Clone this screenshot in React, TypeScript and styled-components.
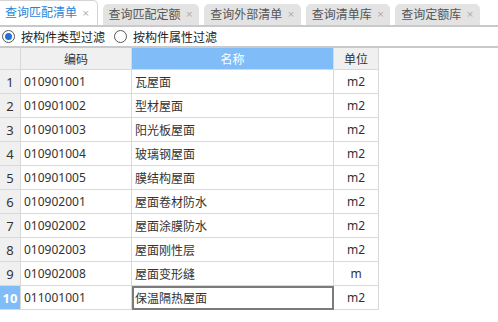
import { Fragment } from "react";
import styled, { createGlobalStyle } from "styled-components";

const rows = [
  { code: "010901001", name: "瓦屋面", unit: "m2" },
  { code: "010901002", name: "型材屋面", unit: "m2" },
  { code: "010901003", name: "阳光板屋面", unit: "m2" },
  { code: "010901004", name: "玻璃钢屋面", unit: "m2" },
  { code: "010901005", name: "膜结构屋面", unit: "m2" },
  { code: "010902001", name: "屋面卷材防水", unit: "m2" },
  { code: "010902002", name: "屋面涂膜防水", unit: "m2" },
  { code: "010902003", name: "屋面刚性层", unit: "m2" },
  { code: "010902008", name: "屋面变形缝", unit: "m" },
  { code: "011001001", name: "保温隔热屋面", unit: "m2" },
];

const tabs = ["查询匹配清单", "查询匹配定额", "查询外部清单", "查询清单库", "查询定额库"];

const GlobalStyle = createGlobalStyle`
  body {
    margin: 0;
    background: #fff;
    font-family: "Noto Sans", "Noto Sans CJK SC", sans-serif;
    font-size: 12px;
    color: #333;
  }
`;

const Page = styled.div`
  width: 498px;
  height: 322px;
  overflow: hidden;
  display: flex;
  flex-direction: column;
`;

const TabBar = styled.div`
  height: 25px;
  display: flex;
  align-items: flex-end;
  gap: 5px;
  border-bottom: 2px solid #c9c9cb;
`;

const Tab = styled.div<{ $active?: boolean }>`
  box-sizing: border-box;
  height: ${(p) => (p.$active ? "25px" : "21px")};
  display: flex;
  align-items: center;
  padding: ${(p) => (p.$active ? "0 7px 0 5px" : "0 6px 0 6px")};
  background: ${(p) => (p.$active ? "#fff" : "#e3e3e3")};
  border: ${(p) => (p.$active ? "1px solid #d4d4d4" : "none")};
  border-left: none;
  border-bottom: none;
  border-radius: ${(p) => (p.$active ? "0 5px 0 0" : "5px 5px 0 0")};
  color: ${(p) => (p.$active ? "#2b86d8" : "#555")};
  font-size: 12px;
  line-height: 1;
  white-space: nowrap;
`;

const Close = styled.span`
  margin-left: 5px;
  color: #aaa;
  font-size: 9px;
  font-family: "DejaVu Sans", sans-serif;
`;

const FilterRow = styled.div`
  height: 19px;
  display: flex;
  align-items: center;
  gap: 9px;
  padding-left: 2px;
  border-bottom: 2px solid #c9c9cb;
`;

const RadioLabel = styled.label`
  display: flex;
  align-items: center;
  gap: 6px;
  font-size: 12px;
  color: #222;
`;

const RadioCircle = styled.span<{ $checked?: boolean }>`
  box-sizing: border-box;
  width: 13px;
  height: 13px;
  border-radius: 50%;
  border: 1px solid #555;
  background: #fff;
  display: flex;
  align-items: center;
  justify-content: center;
  &::after {
    content: "";
    width: 7px;
    height: 7px;
    border-radius: 50%;
    background: ${(p) => (p.$checked ? "#1c74d6" : "transparent")};
  }
`;

const Grid = styled.div`
  display: grid;
  grid-template-columns: 21px 111px 202px 45px;
  grid-auto-rows: 24px;
  grid-template-rows: 22px;
  width: 379px;
`;

const Cell = styled.div<{ $align?: "left" | "center"; $selected?: boolean }>`
  box-sizing: border-box;
  border-right: 1px solid #d9d9d9;
  border-bottom: 1px solid #d9d9d9;
  display: flex;
  align-items: center;
  justify-content: ${(p) => (p.$align === "center" ? "center" : "flex-start")};
  padding-left: ${(p) => (p.$align === "center" ? "0" : "3px")};
  font-size: 12px;
  color: #333;
  white-space: nowrap;
  ${(p) => p.$selected && "outline: 2px solid #7b7b7b; outline-offset: -2px;"}
`;

const HeadCell = styled(Cell)<{ $hot?: boolean }>`
  justify-content: center;
  padding-left: 0;
  background: ${(p) => (p.$hot ? "#80bcf8" : "#f0f0f0")};
  color: ${(p) => (p.$hot ? "#fff" : "#333")};
`;

const IndexCell = styled(Cell)<{ $current?: boolean }>`
  justify-content: center;
  padding-left: 0;
  background: ${(p) => (p.$current ? "#80bcf8" : "#f0f0f0")};
  color: ${(p) => (p.$current ? "#fff" : "#333")};
  font-weight: ${(p) => (p.$current ? "bold" : "normal")};
  font-size: 13px;
`;

export default function App() {
  const current = 9;
  return (
    <Page>
      <GlobalStyle />
      <TabBar>
        {tabs.map((t, i) => (
          <Tab key={t} $active={i === 0}>
            {t}
            <Close>×</Close>
          </Tab>
        ))}
      </TabBar>
      <FilterRow>
        <RadioLabel>
          <RadioCircle $checked />
          按构件类型过滤
        </RadioLabel>
        <RadioLabel>
          <RadioCircle />
          按构件属性过滤
        </RadioLabel>
      </FilterRow>
      <Grid>
        <HeadCell />
        <HeadCell>编码</HeadCell>
        <HeadCell $hot>名称</HeadCell>
        <HeadCell>单位</HeadCell>
        {rows.map((r, i) => (
          <Fragment key={r.code}>
            <IndexCell $current={i === current}>{i + 1}</IndexCell>
            <Cell>{r.code}</Cell>
            <Cell $selected={i === current}>{r.name}</Cell>
            <Cell $align="center">{r.unit}</Cell>
          </Fragment>
        ))}
      </Grid>
    </Page>
  );
}
